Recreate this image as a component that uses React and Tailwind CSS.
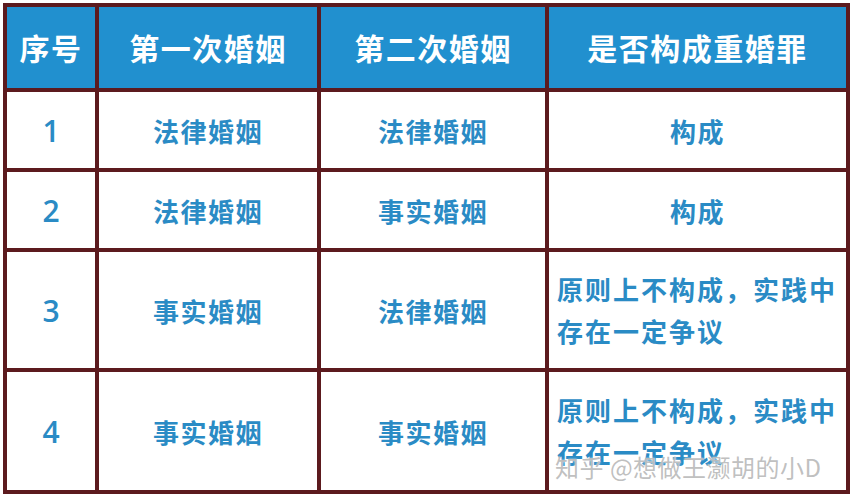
export default function App() {
  const head = ["序号", "第一次婚姻", "第二次婚姻", "是否构成重婚罪"];
  const rows = [
    ["1", "法律婚姻", "法律婚姻", "构成"],
    ["2", "法律婚姻", "事实婚姻", "构成"],
    ["3", "事实婚姻", "法律婚姻", null],
    ["4", "事实婚姻", "事实婚姻", null],
  ];
  const rowH = ["h-[76px]", "h-[76px]", "h-[116px]", "h-[118px]"];
  return (
    <div className="w-[854px] h-[500px] bg-white relative font-['Noto_Sans_CJK_SC',sans-serif]">
      <div className="absolute left-[3px] top-[3px]">
        <div className="grid grid-cols-[88px_218px_224px_297px] gap-[4px] p-[4px] bg-[#5c1a1e]">
          {head.map((h, i) => (
            <div key={i} className="h-[81px] bg-[#2190cf] flex items-center justify-center text-white font-bold text-[30px] tracking-[1.5px]">
              {h}
            </div>
          ))}
          {rows.map((r, ri) =>
            r.map((c, ci) => (
              <div key={ri + "-" + ci} className={`${rowH[ri]} bg-white flex items-center ${c === null ? "justify-start pl-[8px]" : "justify-center"} text-[#2a8bc5] font-bold text-[26px]`}>
                {c === null ? (
                  <div className="leading-[42px] text-[26px] tracking-[2px]">
                    原则上不构成，实践中
                    <br />
                    存在一定争议
                  </div>
                ) : ci === 0 ? (
                  <span className="text-[30px] font-semibold font-['Open_Sans',sans-serif]">{c}</span>
                ) : (
                  <span className="tracking-[1.5px]">{c}</span>
                )}
              </div>
            ))
          )}
        </div>
      </div>
      <div className="absolute left-[555px] top-[449px] text-[24px] text-[#b8b8b8]/90 tracking-[0.5px] [text-shadow:0_0_2px_white]">
        知乎 @想做王灏胡的小D
      </div>
    </div>
  );
}
